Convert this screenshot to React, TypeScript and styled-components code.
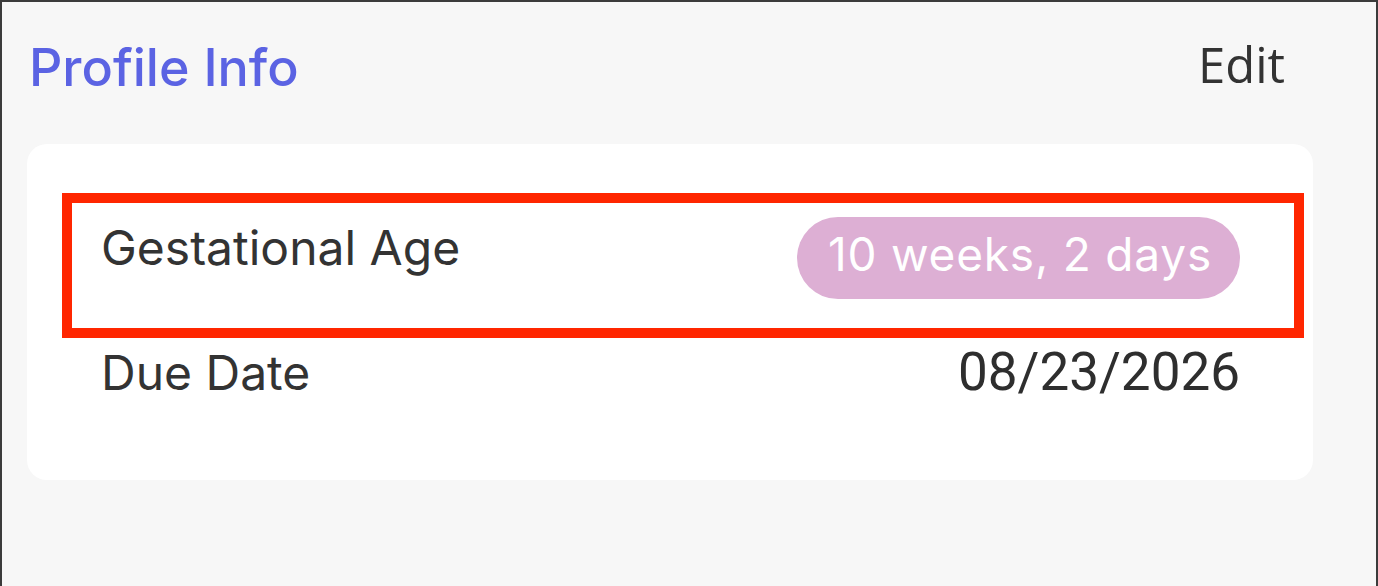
import React from "react";
import styled, { createGlobalStyle } from "styled-components";

const GlobalStyle = createGlobalStyle`
  html, body {
    margin: 0;
    padding: 0;
    background: #f7f7f7;
  }
  * {
    box-sizing: border-box;
  }
`;

const Frame = styled.div`
  width: 1378px;
  height: 586px;
  background: #f7f7f7;
  border-top: 2px solid #3b3b3b;
  border-left: 2px solid #3b3b3b;
  border-right: 2px solid #3b3b3b;
  overflow: hidden;
`;

const Header = styled.div`
  display: flex;
  justify-content: space-between;
  align-items: flex-start;
  padding: 38px 91px 0 27px;
`;

const Titulo = styled.h2`
  margin: 2px 0 0;
  font-family: Inter, "Noto Sans", sans-serif;
  font-weight: 500;
  font-size: 52px;
  line-height: 1;
  color: #5b63e3;
`;

const EditLink = styled.button`
  border: none;
  background: none;
  padding: 0;
  margin: 0;
  cursor: pointer;
  font-family: "Open Sans", sans-serif;
  font-size: 49px;
  line-height: 1;
  color: #333333;
`;

const Card = styled.div`
  width: 1286px;
  margin: 50px 0 0 25px;
  background: #ffffff;
  border-radius: 20px;
  padding: 49px 73px 81px 74px;
`;

const Destaque = styled.div`
  margin: 0 -64px 0 -39px;
  padding: 14px 54px 29px 29px;
  border: 10px solid #ff2600;
`;

const Linha = styled.div<{ $alinhar?: string }>`
  display: flex;
  justify-content: space-between;
  align-items: ${(p) => p.$alinhar || "flex-start"};
`;

const LinhaData = styled(Linha)`
  padding-top: 8px;
`;

const Rotulo = styled.span<{ $topo?: number }>`
  margin-top: ${(p) => p.$topo || 0}px;
  font-family: Inter, "Noto Sans", sans-serif;
  font-size: 48px;
  line-height: 1;
  color: #333333;
`;

const Pilula = styled.span`
  display: inline-block;
  height: 82px;
  padding: 14px 28px 0 31px;
  border-radius: 41px;
  background: #ddafd4;
  color: #ffffff;
  font-family: Inter, "Noto Sans", sans-serif;
  font-size: 46px;
  letter-spacing: 0.8px;
  line-height: 1;
`;

const Valor = styled.span`
  font-family: Roboto, "Liberation Sans", Arial, sans-serif;
  font-size: 53px;
  line-height: 1;
  color: #2e2e2e;
`;

export default function App() {
  return (
    <>
      <GlobalStyle />
      <Frame>
        <Header>
          <Titulo>Profile Info</Titulo>
          <EditLink>Edit</EditLink>
        </Header>
        <Card>
          <Destaque>
            <Linha>
              <Rotulo $topo={7}>Gestational Age</Rotulo>
              <Pilula>10 weeks, 2 days</Pilula>
            </Linha>
          </Destaque>
          <LinhaData $alinhar="baseline">
            <Rotulo>Due Date</Rotulo>
            <Valor>08/23/2026</Valor>
          </LinhaData>
        </Card>
      </Frame>
    </>
  );
}
